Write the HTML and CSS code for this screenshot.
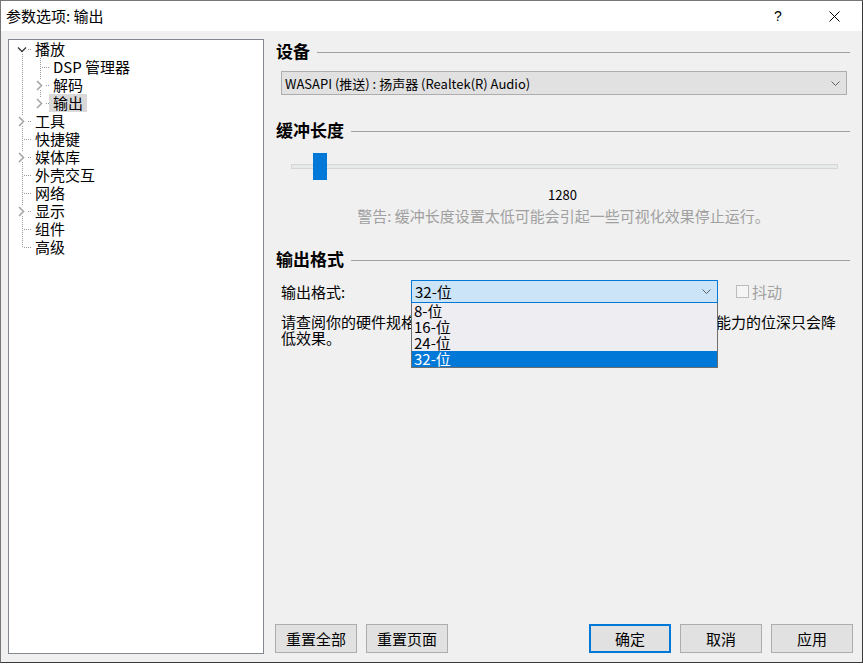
FILE: index.html
```html
<!DOCTYPE html>
<html lang="zh-CN">
<head>
<meta charset="utf-8">
<title>参数选项: 输出</title>
<link rel="stylesheet" href="styles.css">
</head>
<body>
<svg class="defs" width="0" height="0" aria-hidden="true">
  <defs>
    <symbol id="root-open" viewBox="0 0 18 18">
      <line x1="9.5" y1="14" x2="9.5" y2="18" stroke="#999" stroke-width="1" stroke-dasharray="1 1" shape-rendering="crispEdges"/>
      <line x1="15" y1="9.5" x2="18" y2="9.5" stroke="#999" stroke-width="1" stroke-dasharray="1 1" shape-rendering="crispEdges"/>
      <polyline points="5,7.5 9,11.5 13,7.5" fill="none" stroke="#3c3c3c" stroke-width="1.4"/>
    </symbol>
    <symbol id="closed-mid" viewBox="0 0 18 18">
      <line x1="9.5" y1="0" x2="9.5" y2="4" stroke="#999" stroke-width="1" stroke-dasharray="1 1" shape-rendering="crispEdges"/>
      <line x1="9.5" y1="14" x2="9.5" y2="18" stroke="#999" stroke-width="1" stroke-dasharray="1 1" shape-rendering="crispEdges"/>
      <line x1="15" y1="9.5" x2="18" y2="9.5" stroke="#999" stroke-width="1" stroke-dasharray="1 1" shape-rendering="crispEdges"/>
      <polyline points="6,5 10.5,9.5 6,14" fill="none" stroke="#a6a6a6" stroke-width="1.6"/>
    </symbol>
    <symbol id="closed-last" viewBox="0 0 18 18">
      <line x1="9.5" y1="0" x2="9.5" y2="4" stroke="#999" stroke-width="1" stroke-dasharray="1 1" shape-rendering="crispEdges"/>
      <line x1="15" y1="9.5" x2="18" y2="9.5" stroke="#999" stroke-width="1" stroke-dasharray="1 1" shape-rendering="crispEdges"/>
      <polyline points="6,5 10.5,9.5 6,14" fill="none" stroke="#a6a6a6" stroke-width="1.6"/>
    </symbol>
    <symbol id="leaf-mid" viewBox="0 0 18 18">
      <line x1="9.5" y1="0" x2="9.5" y2="18" stroke="#999" stroke-width="1" stroke-dasharray="1 1" shape-rendering="crispEdges"/>
      <line x1="11" y1="9.5" x2="18" y2="9.5" stroke="#999" stroke-width="1" stroke-dasharray="1 1" shape-rendering="crispEdges"/>
    </symbol>
    <symbol id="leaf-last" viewBox="0 0 18 18">
      <line x1="9.5" y1="0" x2="9.5" y2="10" stroke="#999" stroke-width="1" stroke-dasharray="1 1" shape-rendering="crispEdges"/>
      <line x1="11" y1="9.5" x2="18" y2="9.5" stroke="#999" stroke-width="1" stroke-dasharray="1 1" shape-rendering="crispEdges"/>
    </symbol>
    <symbol id="pass" viewBox="0 0 18 18">
      <line x1="9.5" y1="0" x2="9.5" y2="18" stroke="#999" stroke-width="1" stroke-dasharray="1 1" shape-rendering="crispEdges"/>
    </symbol>
  </defs>
</svg>

<div class="window">
  <div class="titlebar">
    <div class="title">参数选项: 输出</div>
    <div class="tb-btn">?</div>
    <div class="tb-btn">
      <svg width="11" height="11" viewBox="0 0 11 11"><path d="M0.5 0.5L10.5 10.5M10.5 0.5L0.5 10.5" stroke="#000" stroke-width="1" fill="none"/></svg>
    </div>
  </div>

  <div class="body">
    <div class="tree">
      <div class="row"><svg class="tc" viewBox="0 0 18 18"><use href="#root-open"/></svg><span class="lbl">播放</span></div>
      <div class="row"><svg class="tc" viewBox="0 0 18 18"><use href="#pass"/></svg><svg class="tc" viewBox="0 0 18 18"><use href="#leaf-mid"/></svg><span class="lbl">DSP 管理器</span></div>
      <div class="row"><svg class="tc" viewBox="0 0 18 18"><use href="#pass"/></svg><svg class="tc" viewBox="0 0 18 18"><use href="#closed-mid"/></svg><span class="lbl">解码</span></div>
      <div class="row"><svg class="tc" viewBox="0 0 18 18"><use href="#pass"/></svg><svg class="tc" viewBox="0 0 18 18"><use href="#closed-last"/></svg><span class="lbl sel">输出</span></div>
      <div class="row"><svg class="tc" viewBox="0 0 18 18"><use href="#closed-mid"/></svg><span class="lbl">工具</span></div>
      <div class="row"><svg class="tc" viewBox="0 0 18 18"><use href="#leaf-mid"/></svg><span class="lbl">快捷键</span></div>
      <div class="row"><svg class="tc" viewBox="0 0 18 18"><use href="#closed-mid"/></svg><span class="lbl">媒体库</span></div>
      <div class="row"><svg class="tc" viewBox="0 0 18 18"><use href="#leaf-mid"/></svg><span class="lbl">外壳交互</span></div>
      <div class="row"><svg class="tc" viewBox="0 0 18 18"><use href="#leaf-mid"/></svg><span class="lbl">网络</span></div>
      <div class="row"><svg class="tc" viewBox="0 0 18 18"><use href="#closed-mid"/></svg><span class="lbl">显示</span></div>
      <div class="row"><svg class="tc" viewBox="0 0 18 18"><use href="#leaf-mid"/></svg><span class="lbl">组件</span></div>
      <div class="row"><svg class="tc" viewBox="0 0 18 18"><use href="#leaf-last"/></svg><span class="lbl">高级</span></div>
    </div>

    <div class="pane">
      <div class="sec-title">设备</div>
      <div class="combo dev">
        <span class="combo-text">WASAPI (推送) : 扬声器 (Realtek(R) Audio)</span>
        <svg class="chev" width="9" height="5" viewBox="0 0 9 5"><path d="M0.5 0.5L4.5 4.5L8.5 0.5" stroke="#606060" fill="none"/></svg>
      </div>

      <div class="sec-title t2">缓冲长度</div>
      <div class="slider">
        <div class="track"></div>
        <div class="thumb"></div>
      </div>
      <div class="value">1280</div>
      <div class="warn">警告: 缓冲长度设置太低可能会引起一些可视化效果停止运行。</div>

      <div class="sec-title t3">输出格式</div>
      <div class="fmt-row">
        <span class="fmt-label">输出格式:</span>
        <div class="combo open">
          <span class="combo-text">32-位</span>
          <svg class="chev" width="9" height="5" viewBox="0 0 9 5"><path d="M0.5 0.5L4.5 4.5L8.5 0.5" stroke="#606060" fill="none"/></svg>
          <div class="dropdown">
            <div class="item">8-位</div>
            <div class="item">16-位</div>
            <div class="item">24-位</div>
            <div class="item sel">32-位</div>
          </div>
        </div>
        <span class="chk"><span class="box"></span>抖动</span>
      </div>
      <p class="note">请查阅你的硬件规格说明，了解其支持的输出格式。使用超出硬件能力的位深只会降<br>低效果。</p>

      <div class="buttons">
        <div class="btn">重置全部</div>
        <div class="btn">重置页面</div>
        <div class="btn default push">确定</div>
        <div class="btn">取消</div>
        <div class="btn">应用</div>
      </div>
    </div>
  </div>
</div>
</body>
</html>
```

FILE: styles.css
```css
html, body {
  margin: 0;
  padding: 0;
  background: #ffffff;
}

body {
  font-family: "Noto Sans CJK SC", "Noto Sans", sans-serif;
  color: #000;
}

.defs {
  position: absolute;
  width: 0;
  height: 0;
  overflow: hidden;
}

.window {
  width: 863px;
  height: 663px;
  box-sizing: border-box;
  border: 1px solid #777777;
  border-right-color: #3a3a3a;
  border-bottom-color: #3a3a3a;
  background: #f0f0f0;
  display: flex;
  flex-direction: column;
}

.titlebar {
  flex: none;
  height: 30px;
  background: #ffffff;
  display: flex;
  align-items: center;
}

.title {
  flex: 1;
  padding-left: 5px;
  font-size: 15px;
  line-height: 30px;
}

.tb-btn {
  width: 56px;
  height: 30px;
  display: flex;
  align-items: center;
  justify-content: center;
  font-size: 14px;
  font-family: "Liberation Sans", sans-serif;
}

.body {
  flex: 1;
  min-height: 0;
  display: flex;
  padding: 8px 0 8px 7px;
}

.tree {
  flex: none;
  width: 256px;
  box-sizing: border-box;
  border: 1px solid #828790;
  background: #ffffff;
  padding: 0 0 0 4px;
}

.row {
  display: flex;
  height: 18px;
  align-items: center;
}

.tc {
  flex: none;
  width: 18px;
  height: 18px;
  display: block;
}

.lbl {
  font-size: 15px;
  line-height: 18px;
  height: 18px;
  padding: 0 4px;
  white-space: nowrap;
}

.lbl.sel {
  background: #d9d9d9;
}

.pane {
  flex: 1;
  min-width: 0;
  display: flex;
  flex-direction: column;
  padding: 1px 9px 0 12px;
}

.sec-title {
  display: flex;
  align-items: center;
  height: 22px;
  font-size: 17px;
  font-weight: bold;
  line-height: 22px;
}

.sec-title::after {
  content: "";
  flex: 1;
  height: 1px;
  background: #a0a0a0;
  margin: 2px 3px 0 7px;
}

.t2 { margin-top: 24px; }
.t3 { margin-top: 22px; }

.combo {
  box-sizing: border-box;
  display: flex;
  align-items: center;
  background: #e1e1e1;
  border: 1px solid #adadad;
}

.combo .chev {
  margin-left: auto;
  flex: none;
}

.combo.dev {
  margin: 9px 6px 0 5px;
  height: 24px;
  padding: 0 6px 0 3px;
  font-size: 13px;
}

.combo-text {
  white-space: nowrap;
}

.slider {
  position: relative;
  height: 27px;
  margin: 12px 15px 0 15px;
}

.track {
  margin-top: 11px;
  height: 5px;
  box-sizing: border-box;
  border: 1px solid #d6d6d6;
  background: #e7eaea;
}

.thumb {
  position: absolute;
  left: 22px;
  top: 0;
  width: 14px;
  height: 27px;
  background: #0078d7;
}

.value {
  margin-top: 7px;
  text-align: center;
  font-size: 13px;
  line-height: 16px;
  padding-right: 4px;
}

.warn {
  margin-top: 3px;
  text-align: center;
  font-size: 15px;
  line-height: 20px;
  color: #a0a0a0;
  padding-right: 2px;
  white-space: nowrap;
}

.fmt-row {
  display: flex;
  align-items: center;
  margin-top: 10px;
  height: 23px;
  padding-left: 5px;
}

.fmt-label {
  width: 130px;
  flex: none;
  font-size: 15px;
  line-height: 20px;
}

.combo.open {
  position: relative;
  width: 307px;
  height: 23px;
  flex: none;
  background: #cce4f7;
  border-color: #0078d7;
  padding: 0 6px 0 3px;
  font-size: 15px;
}

.dropdown {
  position: absolute;
  z-index: 10;
  left: -1px;
  right: -1px;
  top: 22px;
  box-sizing: border-box;
  border: 1px solid #6e6e6e;
  border-top: none;
  background: #eeedf2;
}

.item {
  height: 16px;
  line-height: 16px;
  padding-left: 2px;
  font-size: 15px;
  white-space: nowrap;
}

.item.sel {
  background: #0078d7;
  color: #ffffff;
}

.chk {
  display: flex;
  align-items: center;
  margin-left: 18px;
  font-size: 15px;
  color: #a0a0a0;
}

.box {
  width: 13px;
  height: 13px;
  box-sizing: border-box;
  border: 1px solid #bcbcbc;
  background: #f4f4f4;
  margin-right: 3px;
}

.note {
  margin: 11px 0 0 5px;
  font-size: 15px;
  line-height: 16px;
  white-space: nowrap;
}

.buttons {
  margin-top: auto;
  margin-bottom: 1px;
  margin-left: -1px;
  display: flex;
  gap: 9px;
}

.btn {
  width: 82px;
  height: 29px;
  box-sizing: border-box;
  border: 1px solid #adadad;
  background: #e1e1e1;
  display: flex;
  align-items: center;
  justify-content: center;
  font-size: 15px;
}

.btn.default {
  border: 2px solid #0078d7;
}

.btn.push {
  margin-left: auto;
}
```
